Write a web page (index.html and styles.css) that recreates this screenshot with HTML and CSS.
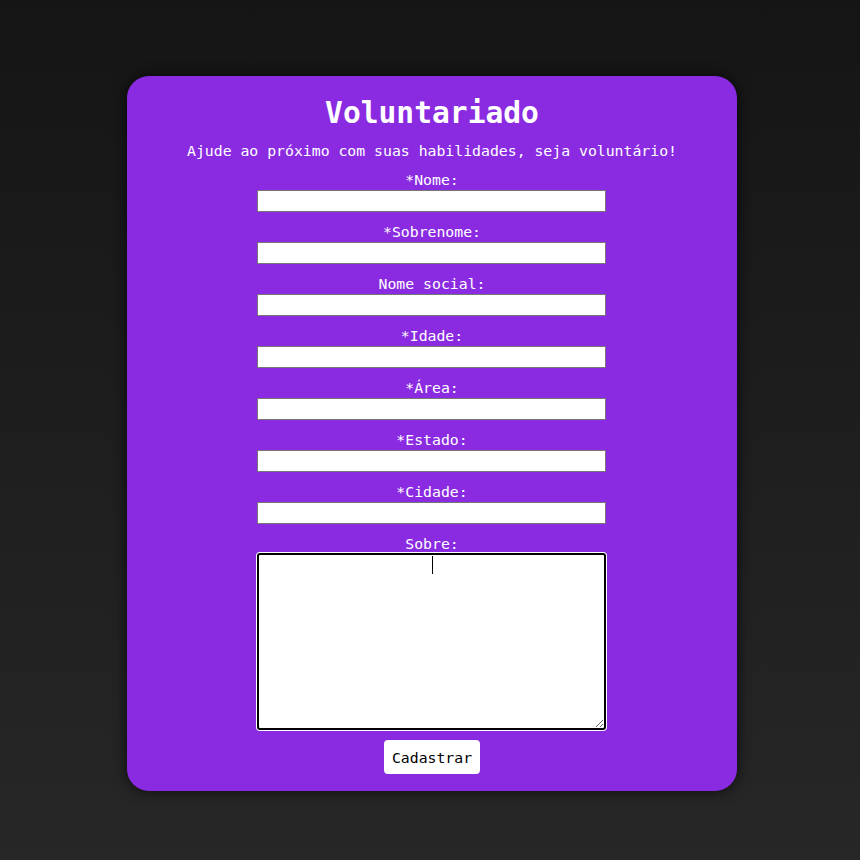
FILE: index.html
```html
<!DOCTYPE html>
<html lang="pt-BR">
<head>
<meta charset="utf-8">
<title>Voluntariado</title>
<link rel="stylesheet" href="styles.css">
</head>
<body>
<main class="page">
  <form class="card">
    <h1 class="title">Voluntariado</h1>
    <p class="subtitle">Ajude ao próximo com suas habilidades, seja voluntário!</p>
    <div class="field"><label class="label">*Nome:</label><input class="input" type="text"></div>
    <div class="field"><label class="label">*Sobrenome:</label><input class="input" type="text"></div>
    <div class="field"><label class="label">Nome social:</label><input class="input" type="text"></div>
    <div class="field"><label class="label">*Idade:</label><input class="input" type="text"></div>
    <div class="field"><label class="label">*Área:</label><input class="input" type="text"></div>
    <div class="field"><label class="label">*Estado:</label><input class="input" type="text"></div>
    <div class="field"><label class="label">*Cidade:</label><input class="input" type="text"></div>
    <div class="field field-last"><label class="label label-tight">Sobre:</label>
      <div class="area-wrap"><textarea class="area"></textarea><span class="caret"></span></div>
    </div>
    <button class="btn" type="button">Cadastrar</button>
  </form>
</main>
</body>
</html>
```
FILE: styles.css
```css
html, body {
  margin: 0;
  padding: 0;
}
body {
  min-height: 860px;
  background: linear-gradient(#151515, #272727);
  font-family: "DejaVu Sans Mono", "Liberation Mono", monospace;
}
.page {
  display: flex;
  justify-content: center;
  padding: 76px 0 0 4px;
}
.card {
  width: 610px;
  box-sizing: border-box;
  background: #8a2be2;
  border-radius: 22px;
  box-shadow: 0 0 14px rgba(0, 0, 0, 0.7);
  padding: 20px 0 17px;
  display: flex;
  flex-direction: column;
  align-items: center;
  color: #fff;
}
.title {
  margin: 0;
  font-size: 29.6px;
  line-height: 34px;
  font-weight: bold;
}
.subtitle {
  margin: 12px 0 11px;
  font-size: 14.8px;
  line-height: 18px;
}
.field {
  display: flex;
  flex-direction: column;
  align-items: center;
  margin-bottom: 11px;
  transform: translateX(-1px);
}
.label {
  font-size: 14.8px;
  line-height: 18px;
  margin-bottom: 1px;
  transform: translateX(1px);
}
.label-tight {
  margin-bottom: 0;
}
.input {
  width: 349px;
  height: 22px;
  box-sizing: border-box;
  border: 1px solid #767676;
  background: #fff;
  margin: 0;
  padding: 1px 2px;
}
.field-last {
  margin-bottom: 10px;
}
.area-wrap {
  position: relative;
  width: 349px;
  height: 177px;
}
.area {
  display: block;
  width: 349px;
  height: 177px;
  box-sizing: border-box;
  margin: 0;
  border: 2px solid #000;
  border-radius: 3px;
  box-shadow: 0 0 0 1px #fff;
  background: #fff;
  outline: none;
  text-align: center;
}
.caret {
  position: absolute;
  left: 175px;
  top: 3px;
  width: 1px;
  height: 18px;
  background: #000;
}
.btn {
  font-family: "DejaVu Sans Mono", "Liberation Mono", monospace;
  font-size: 14.8px;
  color: #000;
  background: #fff;
  border: none;
  border-radius: 4px;
  height: 34px;
  padding: 0 8px;
  cursor: pointer;
}
```
